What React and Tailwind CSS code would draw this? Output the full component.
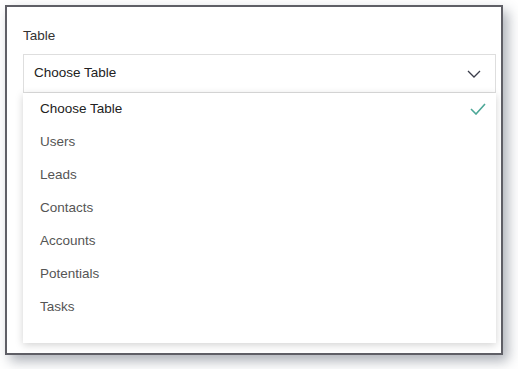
import React from "react";

const items = ["Choose Table", "Users", "Leads", "Contacts", "Accounts", "Potentials", "Tasks"];

export default function App() {
  return (
    <div className="w-[518px] h-[369px] bg-white pl-[5px] pt-[5px]" style={{ fontFamily: '"Liberation Sans", Arial, sans-serif' }}>
      <div className="w-[498px] h-[350px] border-2 border-[#5f5f66] bg-white shadow-[5px_6px_12px_rgba(60,70,85,0.42)] pl-[16px] pr-[5px] pt-[20px]">
        <div className="text-[13.5px] text-[#333] leading-[18px] h-[27px]">Table</div>
        <div className="h-[39px] border border-[#dedede] flex items-center justify-between pl-[10px] pr-[14px] pb-[1px]">
          <span className="text-[13.5px] text-[#222]">Choose Table</span>
          <svg width="14" height="8" viewBox="0 0 14 8" fill="none" className="mt-[2px]">
            <path d="M1 1l6 6 6-6" stroke="#3a3d4a" strokeWidth="1.3" />
          </svg>
        </div>
        <div className="h-[250px] bg-white shadow-[0_2px_8px_rgba(0,0,0,0.18)] pb-[19px]">
          {items.map((it, i) => (
            <div key={it} className="h-[33px] flex items-center justify-between pl-[17px] pr-[10px] pb-[1px]">
              <span className={i === 0 ? "text-[13.5px] text-[#222]" : "text-[13.5px] text-[#555]"}>{it}</span>
              {i === 0 && (
                <svg width="16" height="12" viewBox="0 0 16 12" fill="none" className="-mt-[1px]">
                  <path d="M1 6l5 5L15 1" stroke="#4ca797" strokeWidth="1.6" />
                </svg>
              )}
            </div>
          ))}
        </div>
      </div>
    </div>
  );
}
